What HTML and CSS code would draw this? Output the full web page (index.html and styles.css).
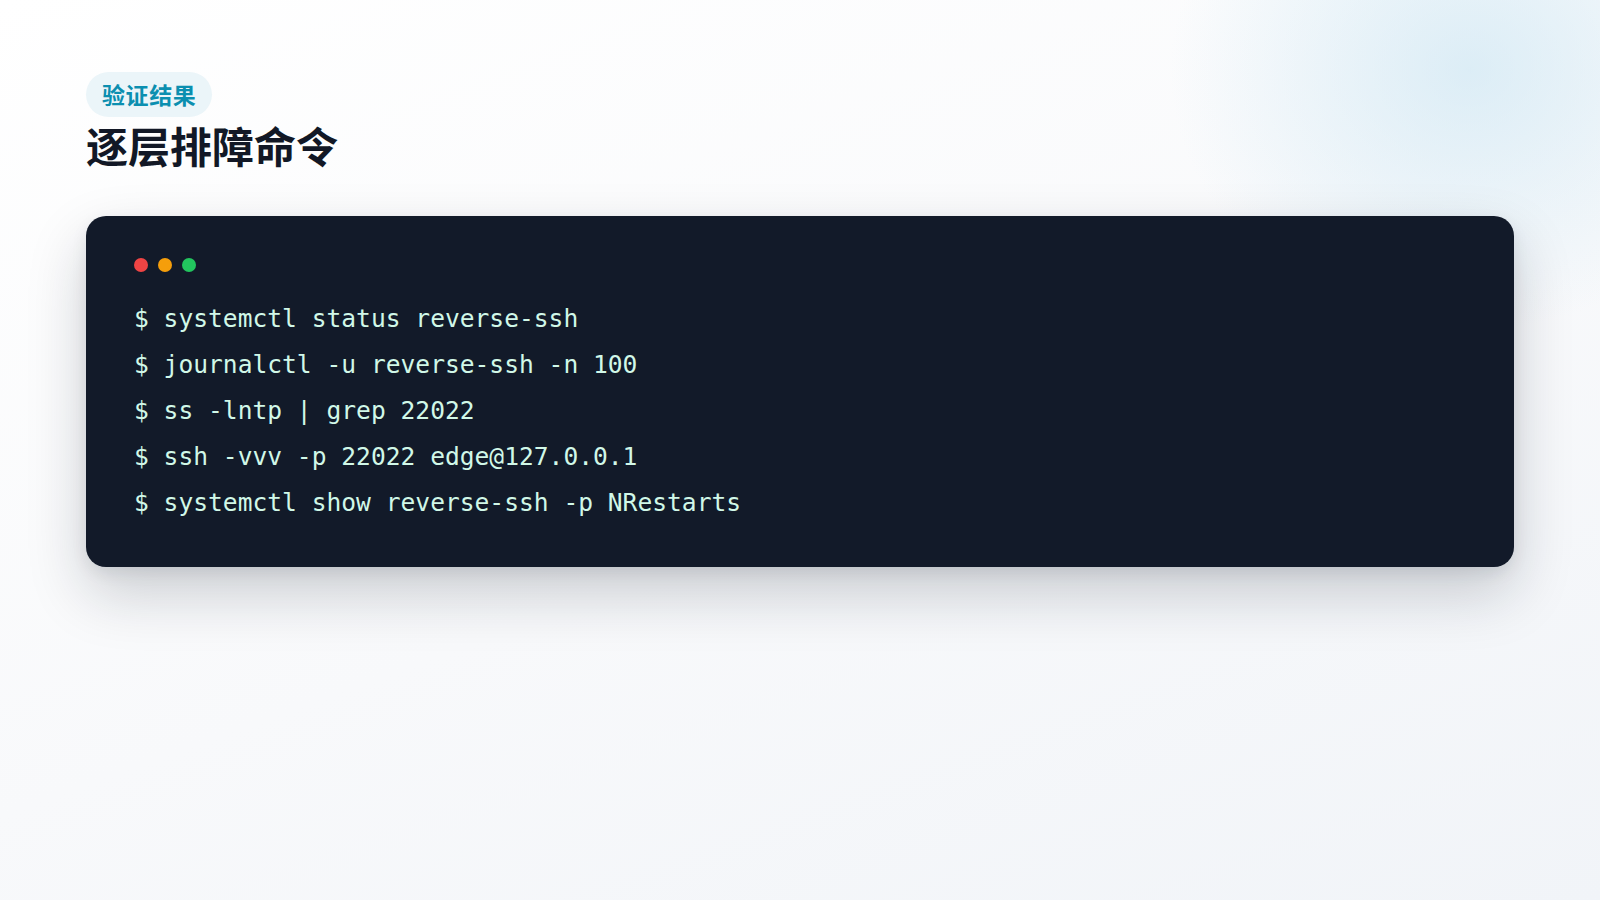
FILE: index.html
```html
<!DOCTYPE html>
<html lang="zh-CN">
<head>
<meta charset="utf-8">
<title>逐层排障命令</title>
<link rel="stylesheet" href="styles.css">
</head>
<body>
<main class="slide">
  <header class="head">
    <span class="badge">验证结果</span>
    <h1 class="title">逐层排障命令</h1>
  </header>
  <section class="terminal">
    <div class="dots">
      <span class="dot red"></span>
      <span class="dot amber"></span>
      <span class="dot green"></span>
    </div>
    <div class="code">
      <div class="line">$ systemctl status reverse-ssh</div>
      <div class="line">$ journalctl -u reverse-ssh -n 100</div>
      <div class="line">$ ss -lntp | grep 22022</div>
      <div class="line">$ ssh -vvv -p 22022 edge@127.0.0.1</div>
      <div class="line">$ systemctl show reverse-ssh -p NRestarts</div>
    </div>
  </section>
</main>
</body>
</html>
```

FILE: styles.css
```css
* { box-sizing: border-box; }
html, body { margin: 0; height: 100%; }
body {
  font-family: "Noto Sans CJK SC", "Noto Sans", sans-serif;
  background:
    radial-gradient(ellipse 300px 260px at 1470px 70px, rgba(200, 228, 242, 0.6) 0, rgba(200, 228, 242, 0) 100%),
    linear-gradient(160deg, #ffffff 0%, #f8f9fb 55%, #f1f4f8 100%);
  overflow: hidden;
}
.slide {
  width: 1600px;
  height: 900px;
  padding: 72px 86px 0;
  display: flex;
  flex-direction: column;
}
.head {
  display: flex;
  flex-direction: column;
  align-items: flex-start;
}
.badge {
  display: inline-block;
  padding: 8px 16px;
  height: 45px;
  border-radius: 23px;
  background: #ebf5f9;
  color: #0b8fb0;
  font-size: 23px;
  font-weight: 700;
  line-height: 29px;
  letter-spacing: 0.6px;
}
.title {
  margin: 3px 0 0;
  font-size: 42px;
  line-height: 50px;
  font-weight: 700;
  color: #121826;
}
.terminal {
  margin-top: 46px;
  background: #121a29;
  border-radius: 20px;
  padding: 42px 48px 41px;
  box-shadow: 0 26px 60px rgba(15, 23, 42, 0.2), 0 6px 16px rgba(15, 23, 42, 0.08);
}
.dots {
  display: flex;
  gap: 10px;
  margin-bottom: 24px;
}
.dot {
  width: 14px;
  height: 14px;
  border-radius: 50%;
}
.red { background: #ef4444; }
.amber { background: #f59e0b; }
.green { background: #22c55e; }
.code {
  font-family: "DejaVu Sans Mono", monospace;
  font-size: 24.6px;
  line-height: 46px;
  color: #d1f8e8;
}
.line { white-space: pre; }
```
